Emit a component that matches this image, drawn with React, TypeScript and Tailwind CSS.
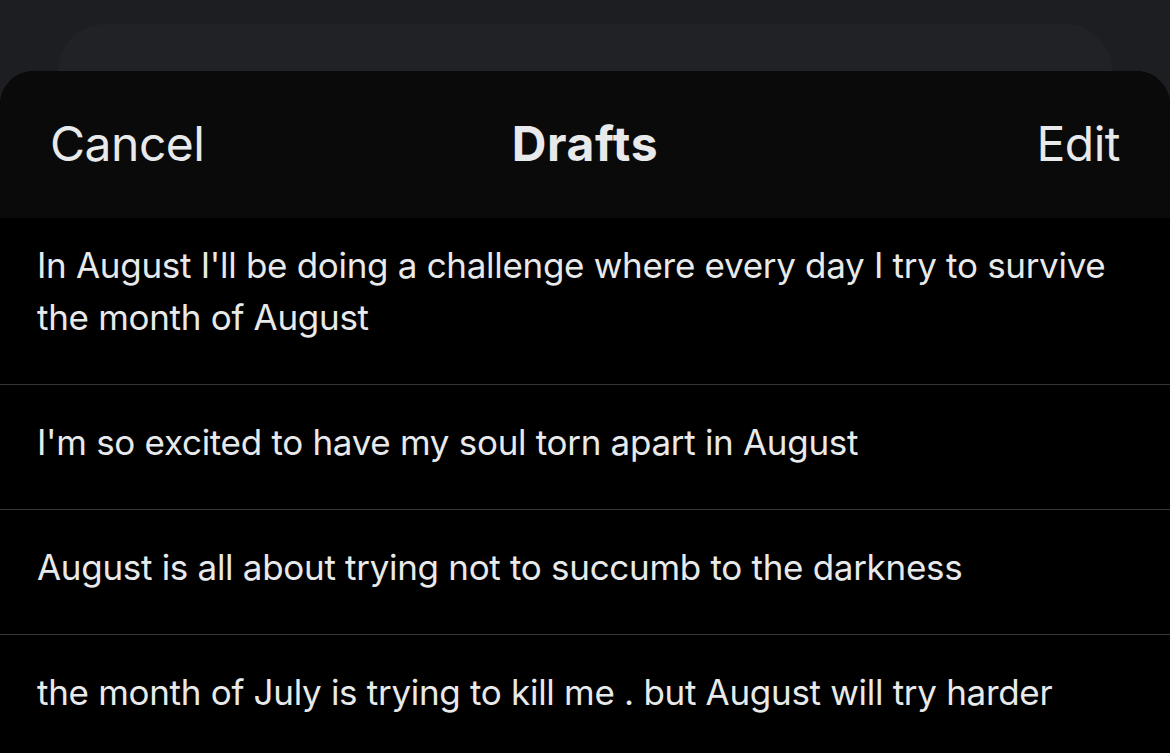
import React from "react";

const drafts = [
  "In August I'll be doing a challenge where every day I try to survive the month of August",
  "I'm so excited to have my soul torn apart in August",
  "August is all about trying not to succumb to the darkness",
  "the month of July is trying to kill me . but August will try harder",
];

export default function App() {
  return (
    <div
      className="w-[1170px] h-[753px] overflow-hidden bg-[#1d1e22] flex flex-col"
      style={{ fontFamily: "Inter, 'Noto Sans', sans-serif" }}
    >
      <div className="h-[71px] shrink-0 px-[58px] pt-[24px] flex">
        <div className="flex-1 rounded-t-[64px] bg-[#212226]" />
      </div>
      <div className="flex-1 rounded-t-[34px] bg-black overflow-hidden flex flex-col">
        <div className="h-[147px] shrink-0 bg-[#0a0a0a] grid grid-cols-[1fr_auto_1fr] items-center px-[50px] pb-[2px] text-[#e7e9ea]">
          <span className="text-[48px] leading-none tracking-[-0.5px] justify-self-start">Cancel</span>
          <span className="text-[48px] font-bold leading-none tracking-[0.6px]">Drafts</span>
          <span className="text-[48px] leading-none tracking-[-0.5px] justify-self-end">Edit</span>
        </div>
        <div className="flex flex-col">
          {drafts.map((d, i) => (
            <div
              key={i}
              className={
                (i === 0 ? "pt-[21px] " : "pt-[31px] border-t border-[#333639] ") +
                "pb-[41px] pl-[37px] pr-[60px] text-[35px] leading-[52px] text-[#e7e9ea] tracking-[-0.3px]"
              }
            >
              {d}
            </div>
          ))}
        </div>
      </div>
    </div>
  );
}
